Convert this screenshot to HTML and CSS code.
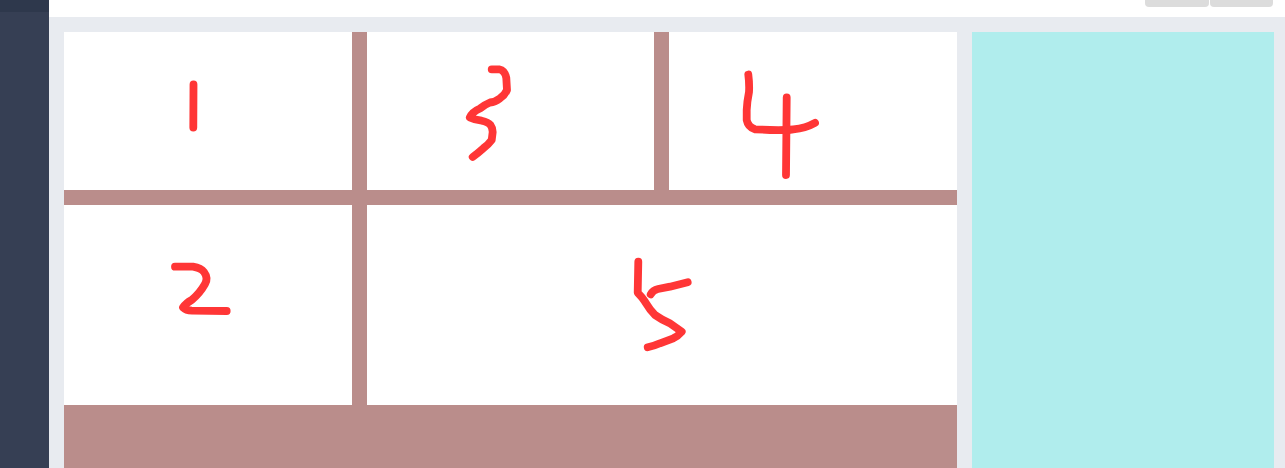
FILE: index.html
```html
<!DOCTYPE html>
<html lang="en">
<head>
<meta charset="utf-8">
<title>Layout</title>
<link rel="stylesheet" href="styles.css">
</head>
<body>
<div class="app">
  <aside class="sidebar"><div class="sidebar-top"></div></aside>
  <div class="main">
    <header class="topbar">
      <span class="btn"></span>
      <span class="btn"></span>
    </header>
    <div class="content">
      <section class="board">
        <div class="cell">
          <svg class="sketch" viewBox="64 32 288 158"><path d="M193.5 84.5L193.3 127.5"/></svg>
        </div>
        <div class="cell">
          <svg class="sketch" viewBox="367 32 287 158"><path d="M491.7 69.3L499 69.3Q505 70.5 506.3 78L507 90Q505 95 500 98.3Q495 102 490 102.5Q484 105 480 108.5Q472 112 469.8 117.5Q475 120 481.7 120.7Q488 122 490.5 125Q492.7 128 492.7 132L491.7 140Q488 145 483.3 148.3Q478 153 472.7 157"/></svg>
        </div>
        <div class="cell">
          <svg class="sketch" viewBox="669 32 288 158"><path d="M748.3 74.5Q749.5 84 749 92Q747 102 746.7 110L746.7 120Q748 127 755 129.3L770 130Q785 130.5 793.3 129.3Q806 128 815 122.8"/><path d="M786.7 97.5L786 175"/></svg>
        </div>
        <div class="cell">
          <svg class="sketch" viewBox="64 205 288 200"><path d="M175 266.7L193 266.7Q201 268 204 272Q208.5 278 205 284Q200 293 191.7 300Q186 303 183 307.5Q186 310.5 192 310.7L226.7 311"/></svg>
        </div>
        <div class="cell cell-wide">
          <svg class="sketch" viewBox="367 205 590 200"><path d="M638.3 261.7L637.7 292.7Q642 297 645 301.7Q650 310 655 315Q662 320 670 323.3L681.7 331.7Q678 336 673.3 338.3L660 343.3Q654 346 647.7 347.3"/><path d="M650.7 294.3Q653 290 658 289L670 286.7L687.7 282.3"/></svg>
        </div>
      </section>
      <section class="panel"></section>
    </div>
  </div>
</div>
</body>
</html>
```
FILE: styles.css
```css
html, body {
  margin: 0;
  height: 100%;
  overflow: hidden;
  font-family: "Liberation Sans", sans-serif;
}

.app {
  display: flex;
  height: 468px;
}

.sidebar {
  flex: 0 0 49px;
  background: #363f54;
}

.sidebar-top {
  height: 12px;
  background: #2e384c;
}

.main {
  flex: 1;
  display: flex;
  flex-direction: column;
  min-width: 0;
}

.topbar {
  flex: 0 0 17px;
  display: flex;
  justify-content: flex-end;
  align-items: flex-start;
  gap: 1px;
  padding-right: 12px;
  background: #fff;
  box-sizing: border-box;
}

.btn {
  width: 63.5px;
  height: 7px;
  background: #dcdcdc;
  border-radius: 0 0 4px 4px;
}

.content {
  flex: 1;
  display: flex;
  gap: 15px;
  padding: 15px 11px 0 15px;
  background: #e8ebf0;
  min-height: 0;
}

.board {
  flex: 0 0 893px;
  display: grid;
  grid-template-columns: 288px 287px 288px;
  grid-template-rows: 158px 200px;
  gap: 15px;
  align-content: start;
  background: #ba8d8b;
}

.cell {
  background: #fff;
  min-width: 0;
}

.cell-wide {
  grid-column: span 2;
}

.sketch {
  display: block;
  width: 100%;
  height: 100%;
  fill: none;
  stroke: #ff3636;
  stroke-width: 7.8;
  stroke-linecap: round;
  stroke-linejoin: round;
}

.panel {
  flex: 1;
  background: #b0eded;
}
```
